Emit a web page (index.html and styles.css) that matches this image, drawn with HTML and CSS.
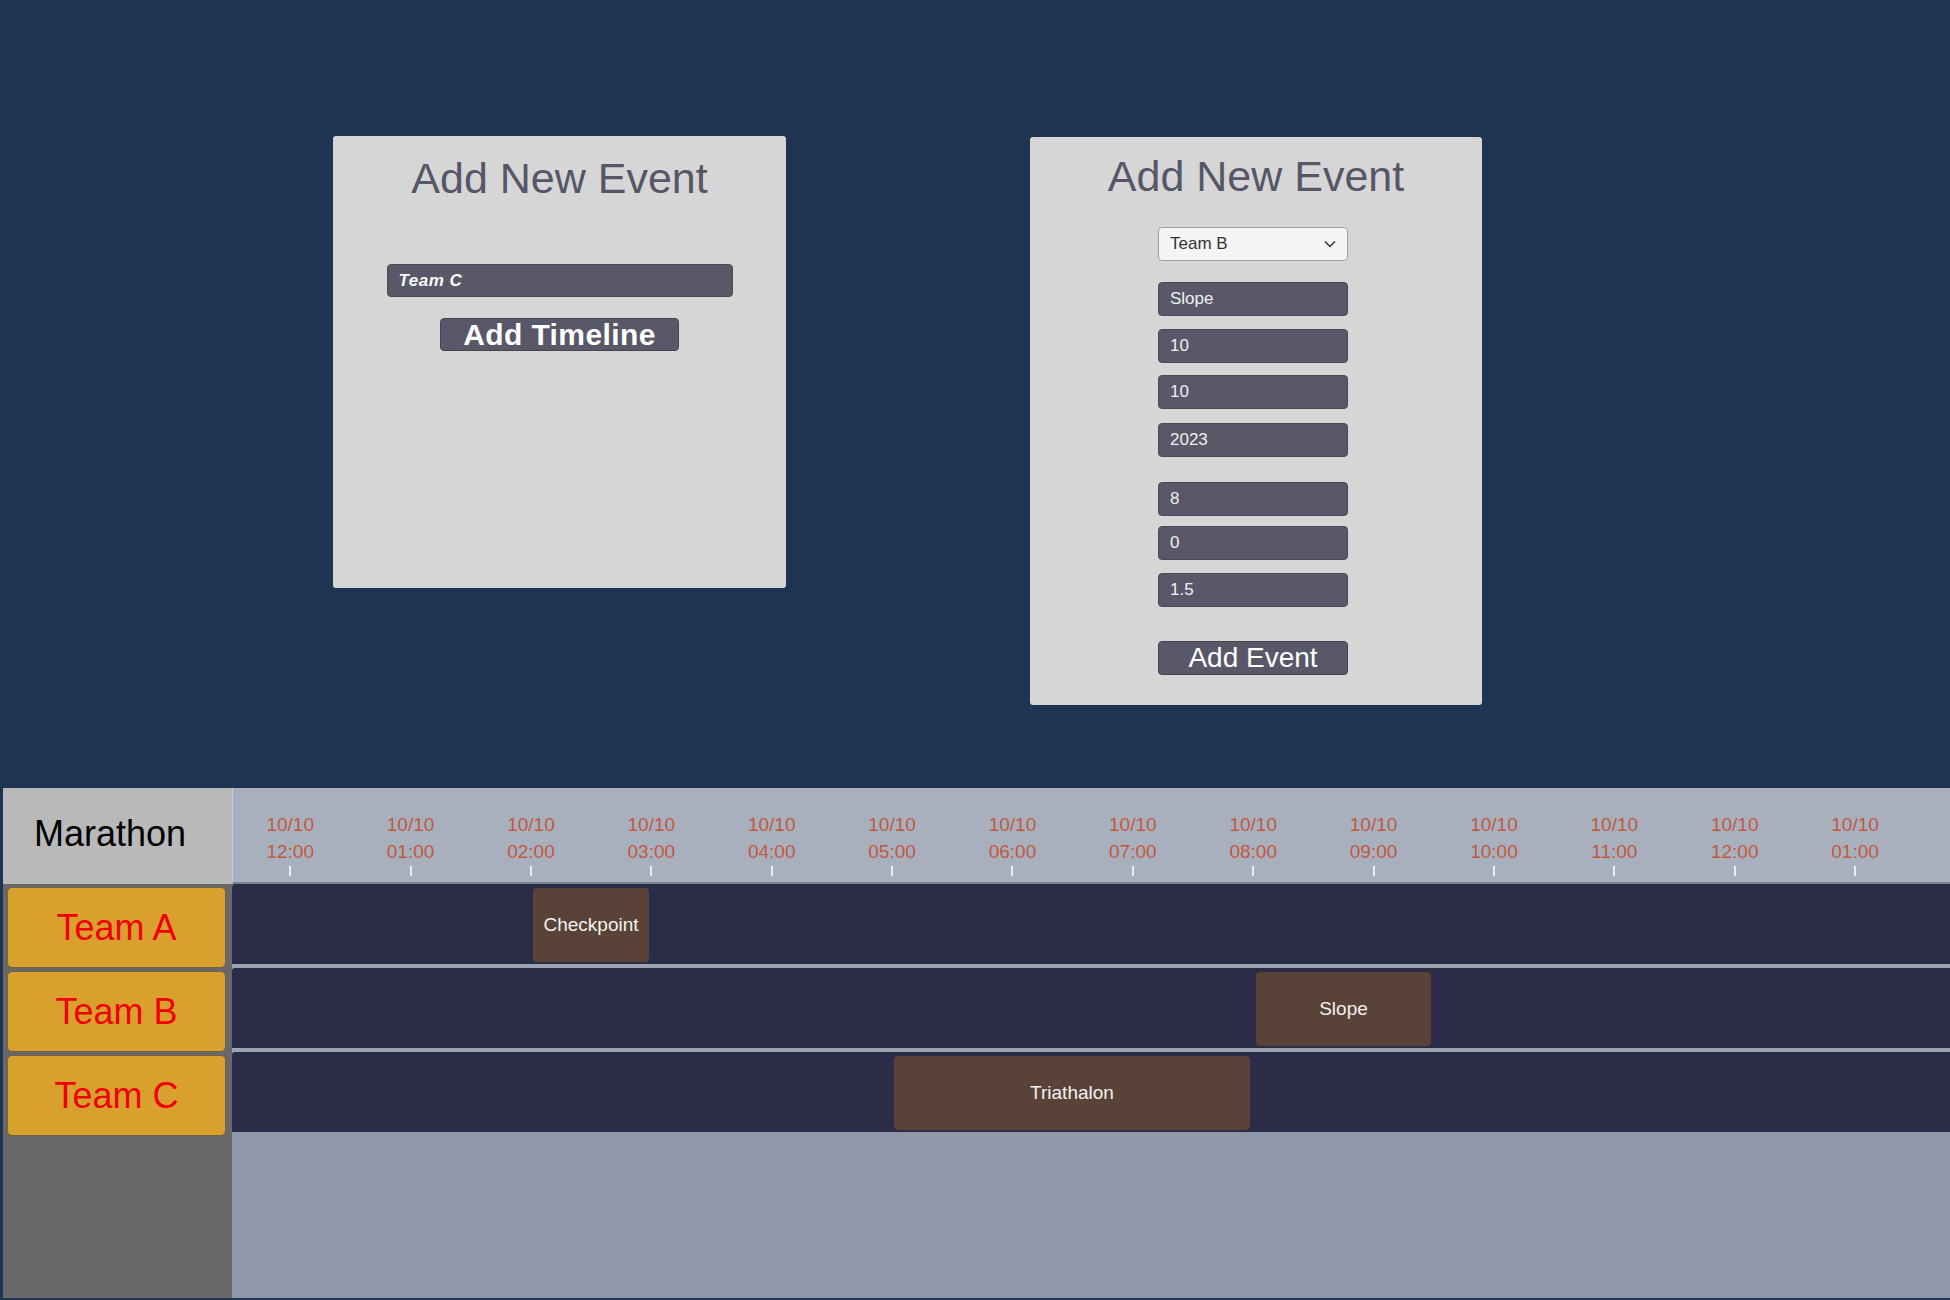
FILE: index.html
```html
<!DOCTYPE html>
<html lang="en">
<head>
<meta charset="utf-8">
<title>Timeline</title>
<link rel="stylesheet" href="styles.css">
</head>
<body>
<div class="top">
  <section class="panel panel-timeline">
    <h2 class="panel-title">Add New Event</h2>
    <input class="field field-team" type="text" value="Team C">
    <button class="btn btn-timeline" type="button">Add Timeline</button>
  </section>
  <section class="panel panel-event">
    <h2 class="panel-title">Add New Event</h2>
    <div class="select mt-26">
      <span>Team B</span>
      <svg class="chevron" width="12" height="8" viewBox="0 0 12 8"><path d="M1 1.5 L6 6.5 L11 1.5" fill="none" stroke="#333" stroke-width="1.5"/></svg>
    </div>
    <input class="field mt-21" type="text" value="Slope">
    <input class="field mt-13" type="text" value="10">
    <input class="field mt-12" type="text" value="10">
    <input class="field mt-14" type="text" value="2023">
    <input class="field mt-25" type="text" value="8">
    <input class="field mt-10" type="text" value="0">
    <input class="field mt-13" type="text" value="1.5">
    <button class="btn btn-event mt-34" type="button">Add Event</button>
  </section>
</div>

<div class="timeline">
  <div class="tl-corner">Marathon</div>
  <div class="tl-header">
    <div class="tl-ticks">
      <div class="tick"><span>10/10</span><span>12:00</span></div>
      <div class="tick"><span>10/10</span><span>01:00</span></div>
      <div class="tick"><span>10/10</span><span>02:00</span></div>
      <div class="tick"><span>10/10</span><span>03:00</span></div>
      <div class="tick"><span>10/10</span><span>04:00</span></div>
      <div class="tick"><span>10/10</span><span>05:00</span></div>
      <div class="tick"><span>10/10</span><span>06:00</span></div>
      <div class="tick"><span>10/10</span><span>07:00</span></div>
      <div class="tick"><span>10/10</span><span>08:00</span></div>
      <div class="tick"><span>10/10</span><span>09:00</span></div>
      <div class="tick"><span>10/10</span><span>10:00</span></div>
      <div class="tick"><span>10/10</span><span>11:00</span></div>
      <div class="tick"><span>10/10</span><span>12:00</span></div>
      <div class="tick"><span>10/10</span><span>01:00</span></div>
    </div>
  </div>
  <div class="tl-teams">
    <div class="team">Team A</div>
    <div class="team">Team B</div>
    <div class="team">Team C</div>
  </div>
  <div class="tl-rows">
    <div class="row">
      <div class="event" style="left:301px;width:116px">Checkpoint</div>
    </div>
    <div class="row">
      <div class="event" style="left:1024px;width:175px">Slope</div>
    </div>
    <div class="row">
      <div class="event" style="left:662px;width:356px">Triathalon</div>
    </div>
  </div>
</div>
</body>
</html>
```

FILE: styles.css
```css
html, body {
  margin: 0;
  padding: 0;
}

body {
  width: 1950px;
  height: 1300px;
  overflow: hidden;
  background: #1f3352;
  font-family: "Liberation Sans", Arial, sans-serif;
}

/* ---------- top forms ---------- */
.top {
  box-sizing: border-box;
  height: 788px;
  padding-top: 136px;
  padding-left: 333px;
  display: flex;
  align-items: flex-start;
  gap: 244px;
}

.panel {
  box-sizing: border-box;
  background: #d6d6d6;
  border-radius: 3px;
  display: flex;
  flex-direction: column;
  align-items: center;
  padding-top: 17px;
}

.panel-timeline {
  width: 453px;
  height: 452px;
}

.panel-event {
  width: 452px;
  height: 568px;
  margin-top: 1px;
  padding-top: 14px;
}

.panel-title {
  margin: 0;
  font-size: 43px;
  line-height: 50px;
  font-weight: normal;
  color: #565667;
  white-space: nowrap;
}

.field {
  box-sizing: border-box;
  width: 190px;
  height: 34px;
  margin-bottom: 0;
  padding: 0 11px;
  background: #585868;
  border: 1px solid #4a4a56;
  border-radius: 4px;
  color: #f0f0f0;
  font-family: "Liberation Sans", Arial, sans-serif;
  font-size: 17px;
  outline: none;
}

.panel-event .field,
.panel-event .select,
.panel-event .btn {
  margin-right: 6px;
}

.field-team {
  width: 346px;
  height: 33px;
  margin-top: 61px;
  font-weight: bold;
  font-style: italic;
  letter-spacing: 0.5px;
  color: #fafafa;
}

.select {
  box-sizing: border-box;
  width: 190px;
  height: 34px;
  padding: 0 11px 0 11px;
  background: #f5f5f5;
  border: 1px solid #a2a2a2;
  border-radius: 4px;
  display: flex;
  align-items: center;
  justify-content: space-between;
  color: #333;
  font-size: 17px;
}

.chevron {
  display: block;
}

.btn {
  box-sizing: border-box;
  padding: 0;
  background: #585868;
  border: 1px solid #45454f;
  border-radius: 4px;
  color: #ffffff;
  font-family: "Liberation Sans", Arial, sans-serif;
  cursor: pointer;
}

.btn-timeline {
  width: 239px;
  height: 33px;
  margin-top: 21px;
  font-size: 30px;
  font-weight: bold;
  letter-spacing: 0.4px;
  line-height: 31px;
}

.btn-event {
  width: 190px;
  height: 34px;
  font-size: 28px;
  line-height: 32px;
}

.mt-10 { margin-top: 10px; }
.mt-12 { margin-top: 12px; }
.mt-13 { margin-top: 13px; }
.mt-14 { margin-top: 14px; }
.mt-21 { margin-top: 21px; }
.mt-25 { margin-top: 25px; }
.mt-26 { margin-top: 26px; }
.mt-34 { margin-top: 34px; }

/* ---------- timeline ---------- */
.timeline {
  margin-left: 3px;
  width: 1947px;
  height: 510px;
  display: grid;
  grid-template-columns: 229px 1fr;
  grid-template-rows: 96px 1fr;
  overflow: hidden;
}

.tl-corner {
  box-sizing: border-box;
  background: #b9b9b9;
  color: #000;
  font-size: 36px;
  display: flex;
  align-items: center;
  padding-left: 31px;
  padding-bottom: 4px;
}

.tl-header {
  box-sizing: border-box;
  background: #a9b0bd;
  border-left: 1px solid #c6cad2;
  border-bottom: 2px solid #7b8390;
  padding-top: 23px;
  overflow: hidden;
}

.tl-ticks {
  display: flex;
  margin-left: -3px;
}

.tick {
  flex: none;
  width: 120.38px;
  display: flex;
  flex-direction: column;
  align-items: center;
  color: #bf5a3f;
  font-size: 19px;
  line-height: 27px;
}

.tick::after {
  content: "";
  display: block;
  width: 2px;
  height: 10px;
  margin-top: 1px;
  background: #e9ebf0;
}

.tl-teams {
  background: #686868;
  padding: 3px 6px 0 4px;
  display: flex;
  flex-direction: column;
  gap: 3px;
}

.team {
  box-sizing: border-box;
  height: 81px;
  background: #d9a02e;
  border: 1px solid #6f6142;
  border-radius: 5px;
  display: flex;
  align-items: center;
  justify-content: center;
  color: #f00000;
  font-size: 36px;
}

.tl-rows {
  background: #8f99a9;
  display: flex;
  flex-direction: column;
}

.row {
  position: relative;
  flex: none;
  height: 80px;
  background: #2b2c47;
  border-top-left-radius: 3px;
}

.row:not(:last-child) {
  border-bottom: 4px solid #9ca4b2;
}

.event {
  position: absolute;
  top: 4px;
  height: 74px;
  box-sizing: border-box;
  background: #594237;
  border-radius: 4px;
  color: #f2f2f2;
  font-size: 19px;
  display: flex;
  align-items: center;
  justify-content: center;
}
```
